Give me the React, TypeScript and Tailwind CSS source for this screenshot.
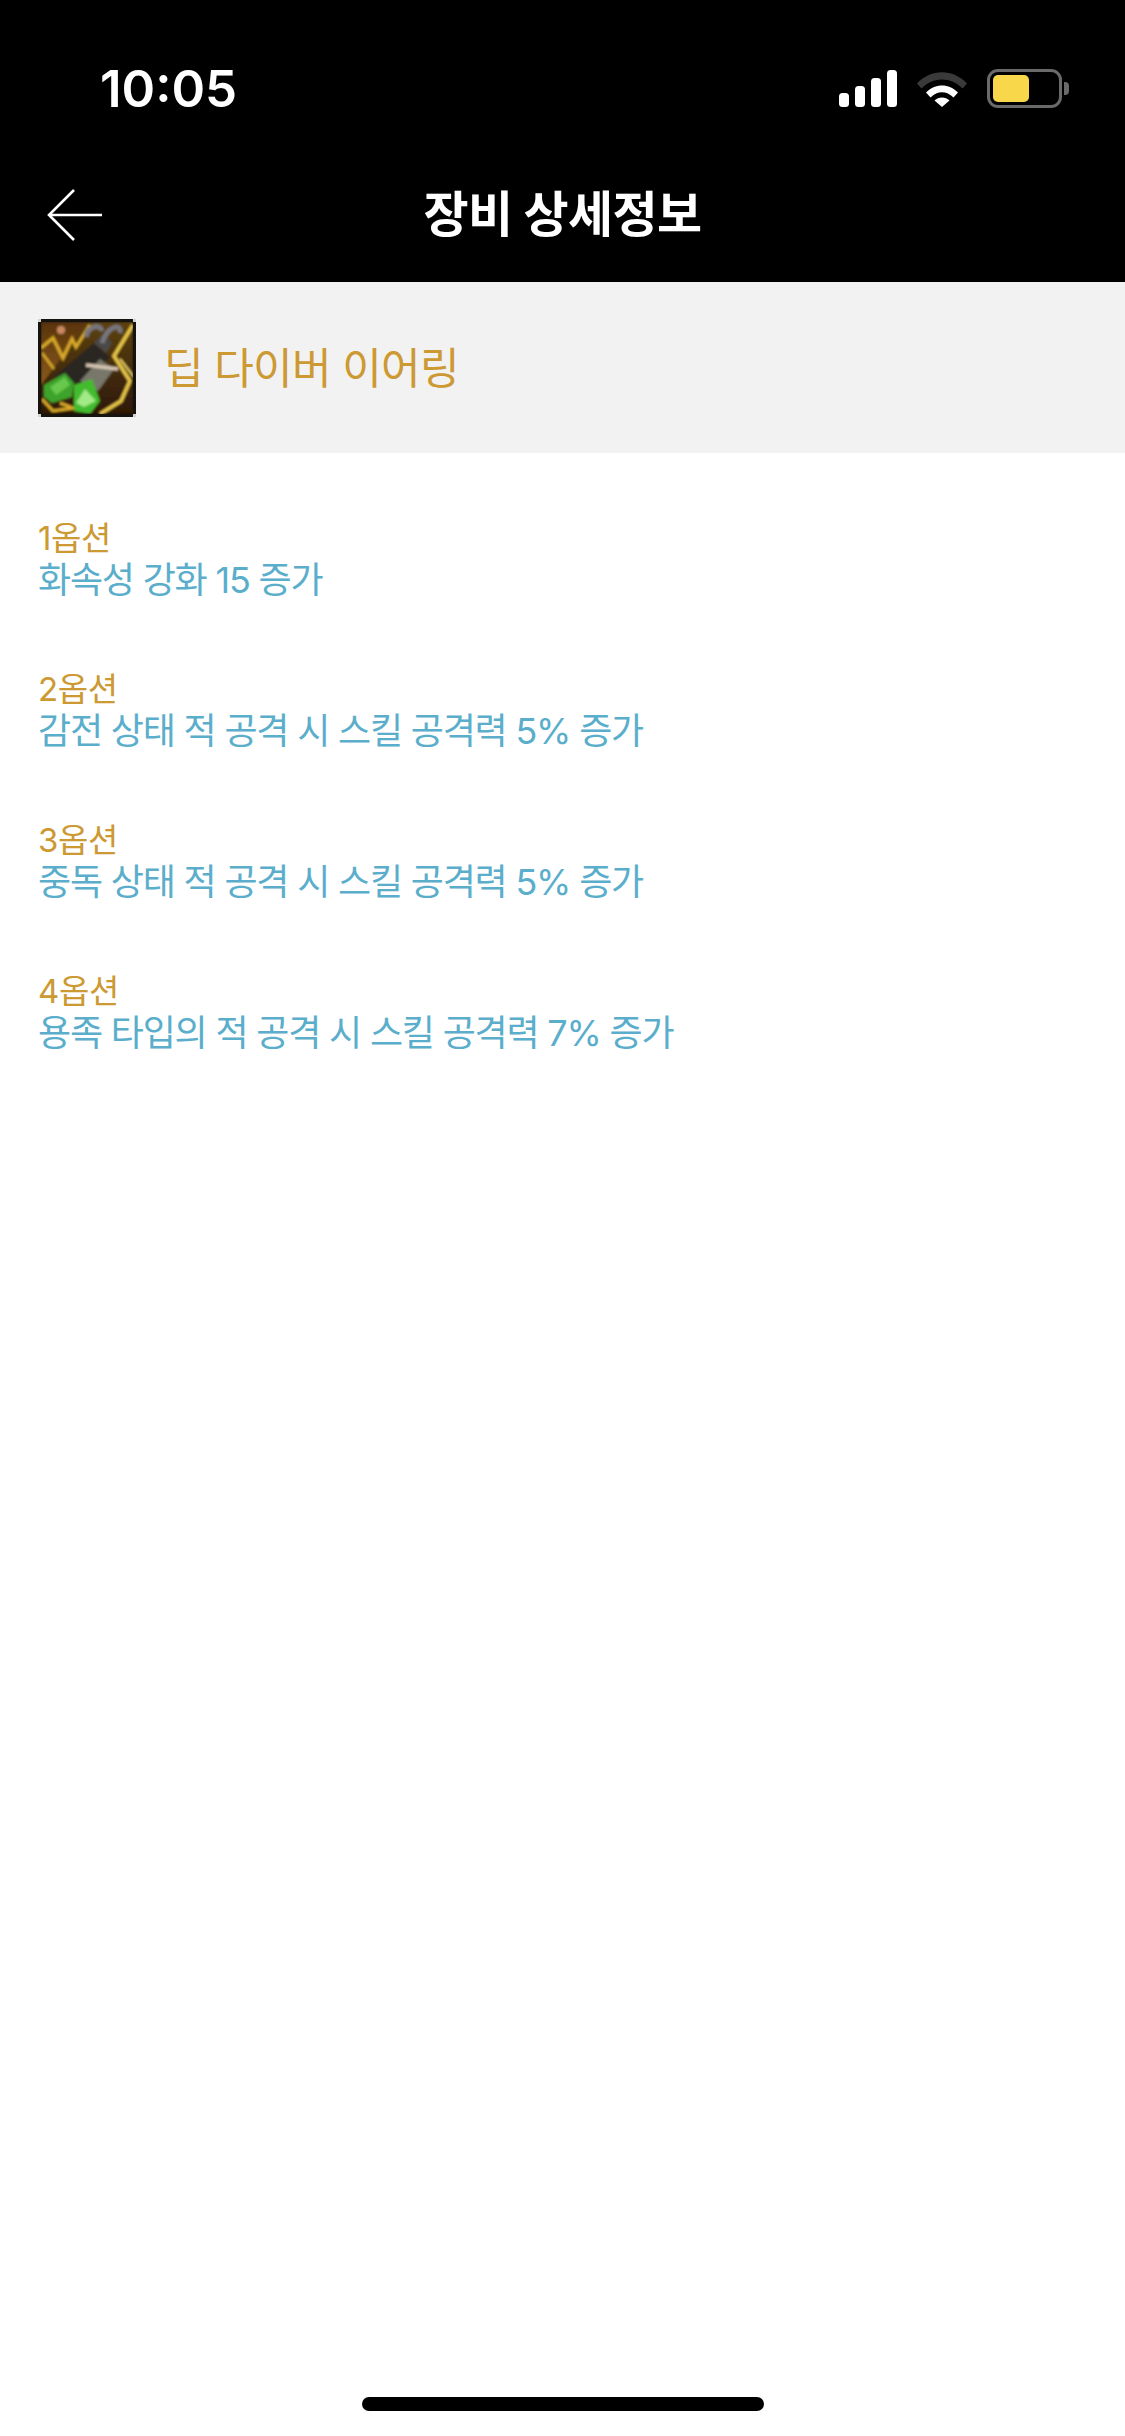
const options = [
  { label: "1옵션", value: "화속성 강화 15 증가" },
  { label: "2옵션", value: "감전 상태 적 공격 시 스킬 공격력 5% 증가" },
  { label: "3옵션", value: "중독 상태 적 공격 시 스킬 공격력 5% 증가" },
  { label: "4옵션", value: "용족 타입의 적 공격 시 스킬 공격력 7% 증가" },
];

const font = "font-['Inter','Noto_Sans_CJK_KR',sans-serif]";

const SignalIcon = () => (
  <svg width="58" height="37" viewBox="0 0 58 37" aria-hidden>
    <rect x="0" y="23" width="10" height="14" rx="3.5" fill="#fff" />
    <rect x="16" y="16" width="10" height="21" rx="3.5" fill="#fff" />
    <rect x="32" y="8" width="10" height="29" rx="3.5" fill="#fff" />
    <rect x="48" y="0" width="10" height="37" rx="3.5" fill="#fff" />
  </svg>
);

const WifiIcon = () => (
  <svg width="52" height="37" viewBox="0 0 52 37" aria-hidden>
    <path d="M1 13.5C15 -1.5 37 -1.5 51 13.5L46.5 18.5C35 6.5 17 6.5 5.5 18.5Z" fill="#3a3a3a" />
    <path d="M10 22.5C19 13 33 13 42 22.5L37.5 27.5C30.5 20.5 21.5 20.5 14.5 27.5Z" fill="#fff" />
    <path d="M18.5 30.5C22.5 26.5 29.5 26.5 33.5 30.5L26 37Z" fill="#fff" />
  </svg>
);

const BatteryIcon = () => (
  <div className="flex items-center gap-[2px]">
    <div className="flex h-[39px] w-[75px] items-center rounded-[11px] border-[3px] border-[#6a6a6a] p-[3px]">
      <div className="h-full w-[36px] rounded-[5px] bg-[#f8d74a]" />
    </div>
    <div className="h-[13px] w-[5px] rounded-r-[4px] bg-[#6a6a6a]" />
  </div>
);

const BackArrow = () => (
  <svg width="56" height="52" viewBox="0 0 56 52" fill="none" stroke="#fff" strokeWidth="2.6" aria-hidden>
    <path d="M55 26H2" />
    <path d="M27 1 2 26l25 25" />
  </svg>
);

const ItemIcon = () => (
  <svg width="98" height="98" viewBox="0 0 98 98" className="shrink-0" aria-hidden>
    <defs>
      <filter id="soft" x="-20%" y="-20%" width="140%" height="140%">
        <feGaussianBlur stdDeviation="1.1" />
      </filter>
      <linearGradient id="glow" x1="0" y1="0" x2="0" y2="1">
        <stop offset="0" stopColor="#5a3410" />
        <stop offset="1" stopColor="#8a5a14" />
      </linearGradient>
      <linearGradient id="dusk" x1="0" y1="0" x2="0" y2="1">
        <stop offset="0" stopColor="#5c4210" />
        <stop offset="1" stopColor="#2e1806" />
      </linearGradient>
      <clipPath id="inner">
        <rect x="3" y="3" width="92" height="92" />
      </clipPath>
    </defs>
    <rect width="98" height="98" rx="3" fill="#17130f" />
    <g clipPath="url(#inner)">
      <g filter="url(#soft)">
        <rect x="3" y="3" width="92" height="92" fill="url(#dusk)" />
        <path d="M3 3H50L3 66Z" fill="url(#glow)" />
        <circle cx="23" cy="11" r="4" fill="#c98a62" />
        <path d="M3 29 15 19 25 39 34 20 38 28 52 6" fill="none" stroke="#d8a92a" strokeWidth="3.2" />
        <path d="M4 34 16 50" fill="none" stroke="#d8a92a" strokeWidth="2.5" />
        <path d="M95 6 76 37 92 62 83 82 62 95" fill="none" stroke="#e8c648" strokeWidth="3.5" />
        <path d="M82 40 96 58" fill="none" stroke="#f0d868" strokeWidth="2" />
        <path d="M4 80 15 92 35 89 22 84" fill="none" stroke="#d8a92a" strokeWidth="3" />
        <path d="M16 58 56 24 72 38 44 66Z" fill="#2a2622" />
        <path d="M56 24 66 14 74 24 68 34Z" fill="#4c4a46" />
        <path d="M42 62 62 40 76 50 60 72Z" fill="#77776a" />
        <path d="M48 46 80 50" stroke="#d6c6b2" strokeWidth="3.5" />
        <path d="M48 18C50 7 62 4 64 12M64 24C70 6 84 4 82 14" fill="none" stroke="#77767c" strokeWidth="5" />
        <path d="M6 66 27 54 36 64 34 78 14 84 6 78Z" fill="#3da32b" />
        <path d="M12 68 27 58 32 66 18 76Z" fill="#68c84e" />
        <path d="M36 66 54 60 62 82 52 95 36 92Z" fill="#42bb2e" />
        <path d="M38 84 47 70 58 82 46 88Z" fill="#a2ea86" />
      </g>
    </g>
    <rect x="0" y="0" width="3" height="3" fill="#d5d5d5" />
    <rect x="95" y="0" width="3" height="3" fill="#d5d5d5" />
    <rect x="0" y="95" width="3" height="3" fill="#d5d5d5" />
    <rect x="95" y="95" width="3" height="3" fill="#d5d5d5" />
  </svg>
);

export default function App() {
  return (
    <div className={`flex h-[2436px] w-[1125px] flex-col bg-white ${font}`}>
      <header className="h-[282px] shrink-0 bg-black text-white">
        <div className="flex h-[160px] items-start justify-between pt-[62px] pl-[100px] pr-[56px]">
          <span className="text-[51px] leading-[54px] font-semibold">10:05</span>
          <div className="flex items-center pt-[7px]">
            <SignalIcon />
            <div className="ml-[19px] mr-[19px]">
              <WifiIcon />
            </div>
            <BatteryIcon />
          </div>
        </div>
        <div className="relative flex h-[110px] items-center justify-center">
          <div className="absolute left-[47px] top-[29px]">
            <BackArrow />
          </div>
          <h1 className="text-[49px] font-bold leading-[54px] tracking-[-0.6px]">장비 상세정보</h1>
        </div>
      </header>

      <section className="flex h-[171px] shrink-0 items-center gap-[28px] bg-[#f2f2f2] pl-[38px]">
        <ItemIcon />
        <span className="text-[43px] leading-[52px] tracking-[-0.7px] text-[#cc9933]">딥 다이버 이어링</span>
      </section>

      <main className="flex flex-1 flex-col gap-[67px] pl-[38px] pt-[64px]">
        {options.map((option) => (
          <div key={option.label} className="flex flex-col">
            <span className="text-[33px] leading-[42px] tracking-[-0.4px] text-[#cc9933]">{option.label}</span>
            <span className="text-[36px] leading-[42px] tracking-[-1.2px] text-[#5aaecb]">{option.value}</span>
          </div>
        ))}
      </main>

      <footer className="flex h-[39px] shrink-0 justify-center">
        <div className="h-[14px] w-[402px] rounded-full bg-black" />
      </footer>
    </div>
  );
}
